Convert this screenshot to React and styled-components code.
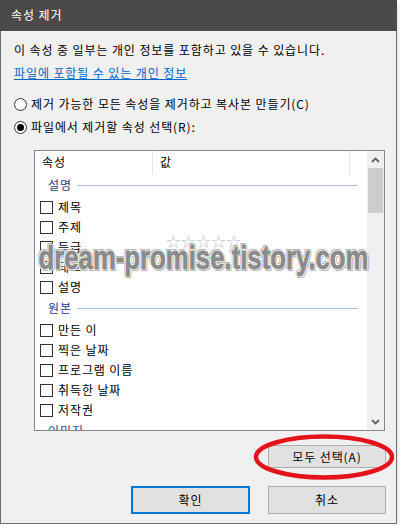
import React, { useState } from "react";
import styled, { createGlobalStyle } from "styled-components";

const groups = [
  { title: "설명", items: ["제목", "주제", "등급", "태그", "설명"] },
  { title: "원본", items: ["만든 이", "찍은 날짜", "프로그램 이름", "취득한 날짜", "저작권"] },
  { title: "이미지", items: ["사진 ID", "크기"] },
];

const GlobalStyle = createGlobalStyle`
  * { box-sizing: border-box; }
  body {
    margin: 0;
    background: #ffffff;
    font-family: "Noto Sans CJK KR", "Noto Sans", sans-serif;
    font-size: 12px;
    letter-spacing: 0.9px;
    color: #000;
  }
`;

function Chevron({ up }) {
  return (
    <svg width="9" height="6" viewBox="0 0 9 6">
      <polyline
        points={up ? "1,5 4.5,1.5 8,5" : "1,1 4.5,4.5 8,1"}
        fill="none"
        stroke="#606060"
        strokeWidth="1.8"
      />
    </svg>
  );
}

function App() {
  const [mode, setMode] = useState("select");
  const [checked, setChecked] = useState({});

  const toggle = (key) => setChecked((c) => ({ ...c, [key]: !c[key] }));

  return (
    <>
      <GlobalStyle />
      <Window>
        <TitleBar>속성 제거</TitleBar>
        <Body>
          <Intro>이 속성 중 일부는 개인 정보를 포함하고 있을 수 있습니다.</Intro>
          <Link href="#">파일에 포함될 수 있는 개인 정보</Link>

          <Radios>
            <RadioRow onClick={() => setMode("copy")}>
              <Radio selected={mode === "copy"} />
              제거 가능한 모든 속성을 제거하고 복사본 만들기(C)
            </RadioRow>
            <RadioRow onClick={() => setMode("select")}>
              <Radio selected={mode === "select"} />
              파일에서 제거할 속성 선택(R):
            </RadioRow>
          </Radios>

          <ListBox>
            <ListInner>
              <HeaderRow>
                <HeaderCell width={118}>속성</HeaderCell>
                <HeaderCell width={197}>값</HeaderCell>
              </HeaderRow>
              {groups.map((g) => (
                <div key={g.title}>
                  <GroupHeader>
                    <span>{g.title}</span>
                    <GroupLine />
                  </GroupHeader>
                  {g.items.map((item) => {
                    const key = g.title + item;
                    return (
                      <ItemRow key={key} onClick={() => toggle(key)}>
                        <Check checked={checked[key]} />
                        {item}
                      </ItemRow>
                    );
                  })}
                </div>
              ))}
            </ListInner>
            <ScrollBar>
              <ScrollArrow>
                <Chevron up />
              </ScrollArrow>
              <Track>
                <Thumb />
              </Track>
              <ScrollArrow>
                <Chevron />
              </ScrollArrow>
            </ScrollBar>
          </ListBox>

          <SelectAllRow>
            <Button width={118} height={23}>모두 선택(A)</Button>
            <Ellipse width="146" height="50" viewBox="0 0 146 50">
              <ellipse cx="73" cy="25" rx="68" ry="20.5" fill="none" stroke="#e3121b" strokeWidth="4.5" />
            </Ellipse>
          </SelectAllRow>

          <ButtonRow>
            <Button width={119} height={28} primary>확인</Button>
            <Button width={118} height={28}>취소</Button>
          </ButtonRow>

          <Watermark>
            <Stars>☆☆☆☆☆</Stars>
            <Mark>dream-promise.tistory.com</Mark>
          </Watermark>
        </Body>
      </Window>
    </>
  );
}

export default App;

const Window = styled.div`
  width: 397px;
  height: 524px;
  border: 1px solid #6e6e6e;
  border-top: none;
  background: #f0f0f0;
  box-shadow: 0 3px 6px rgba(0, 0, 0, 0.18);
  display: flex;
  flex-direction: column;
`;

const TitleBar = styled.div`
  height: 31px;
  margin: 0 -1px;
  background: #4b4a48;
  color: #ffffff;
  padding-left: 11px;
  line-height: 30px;
  font-size: 12px;
`;

const Body = styled.div`
  position: relative;
  flex: 1;
  padding: 0 10px 0 13px;
  display: flex;
  flex-direction: column;
`;

const Intro = styled.div`
  margin-top: 11px;
  line-height: 16px;
`;

const Link = styled.a`
  margin-top: 7px;
  line-height: 16px;
  color: #0066cc;
  text-decoration: underline;
  align-self: flex-start;
`;

const Radios = styled.div`
  margin-top: 15px;
  display: flex;
  flex-direction: column;
  gap: 7px;
`;

const RadioRow = styled.div`
  display: flex;
  align-items: center;
  gap: 4px;
  height: 16px;
  line-height: 16px;
  cursor: default;
`;

const Radio = styled.span`
  width: 13px;
  height: 13px;
  border-radius: 50%;
  border: 1px solid #333333;
  background: #ffffff;
  display: flex;
  align-items: center;
  justify-content: center;

  &::after {
    content: "";
    width: 7px;
    height: 7px;
    border-radius: 50%;
    background: #000;
    display: ${(p) => (p.selected ? "block" : "none")};
  }
`;

const ListBox = styled.div`
  margin: 15px 0 0 20px;
  width: 351px;
  height: 281px;
  border: 1px solid #828790;
  background: #ffffff;
  display: flex;
  overflow: hidden;
`;

const ListInner = styled.div`
  flex: 1;
  overflow: hidden;
`;

const HeaderRow = styled.div`
  display: flex;
  height: 22px;
`;

const HeaderCell = styled.div`
  width: ${(p) => p.width}px;
  height: 24px;
  padding: 3px 0 0 7px;
  line-height: 16px;
  border-right: 1px solid #e5e5e5;
`;

const GroupHeader = styled.div`
  display: flex;
  align-items: center;
  height: 23px;
  padding: 0 9px 0 13px;
  color: #1e3b94;
  gap: 5px;
  line-height: 16px;
`;

const GroupLine = styled.div`
  flex: 1;
  height: 1px;
  margin-top: 2px;
  background: #b0c2e2;
`;

const ItemRow = styled.div`
  display: flex;
  align-items: flex-start;
  height: 20px;
  padding: 3px 0 0 5px;
  gap: 5px;
  line-height: 16px;
  cursor: default;
`;

const Check = styled.span`
  width: 13px;
  height: 13px;
  margin-top: 2px;
  border: 1px solid #333333;
  background: #ffffff;
  position: relative;

  &::after {
    content: "";
    position: absolute;
    left: 3px;
    top: 0px;
    width: 4px;
    height: 8px;
    border: solid #000;
    border-width: 0 2px 2px 0;
    transform: rotate(45deg);
    display: ${(p) => (p.checked ? "block" : "none")};
  }
`;

const ScrollBar = styled.div`
  width: 17px;
  background: #f0f0f0;
  display: flex;
  flex-direction: column;
`;

const ScrollArrow = styled.div`
  height: 17px;
  display: flex;
  align-items: center;
  justify-content: center;
`;

const Track = styled.div`
  flex: 1;
  padding: 0 1px;
`;

const Thumb = styled.div`
  height: 45px;
  background: #cdcdcd;
`;

const SelectAllRow = styled.div`
  position: relative;
  margin-top: 14px;
  display: flex;
  justify-content: flex-end;
`;

const Ellipse = styled.svg`
  position: absolute;
  right: -11px;
  top: -13px;
  pointer-events: none;
`;

const ButtonRow = styled.div`
  margin-top: 18px;
  display: flex;
  justify-content: flex-end;
  gap: 18px;
`;

const Button = styled.button`
  width: ${(p) => p.width}px;
  height: ${(p) => p.height}px;
  background: #e1e1e1;
  border: ${(p) => (p.primary ? "2px solid #0078d7" : "1px solid #adadad")};
  font-family: inherit;
  font-size: 12px;
  letter-spacing: 0.9px;
  color: #000;
  padding: 0;
  line-height: 16px;
`;

const Watermark = styled.div`
  position: absolute;
  left: 21px;
  top: 202px;
  width: 362px;
  display: flex;
  flex-direction: column;
  align-items: center;
  pointer-events: none;
  letter-spacing: 0;
`;

const Stars = styled.div`
  font-family: "DejaVu Sans", sans-serif;
  font-size: 18px;
  line-height: 18px;
  color: #bcbcbc;
  letter-spacing: -1px;
`;

const Mark = styled.div`
  margin-top: -10px;
  font-family: "Liberation Sans", Arial, sans-serif;
  font-weight: bold;
  font-size: 33px;
  line-height: 34px;
  white-space: nowrap;
  transform: scaleX(0.78);
  color: #8b8b8b;
  -webkit-text-stroke: 0.8px #8b8b8b;
  text-shadow: 1px 0 #fff, -1px 0 #fff, 0 1px #fff, 0 -1px #fff, 1px 1px #fff,
    -1px -1px #fff, 1px -1px #fff, -1px 1px #fff, 2px 0 #b5b5b5, -2px 0 #b5b5b5,
    0 2px #b5b5b5, 0 -2px #b5b5b5, 2px 2px #b5b5b5, -2px -2px #b5b5b5;
`;
